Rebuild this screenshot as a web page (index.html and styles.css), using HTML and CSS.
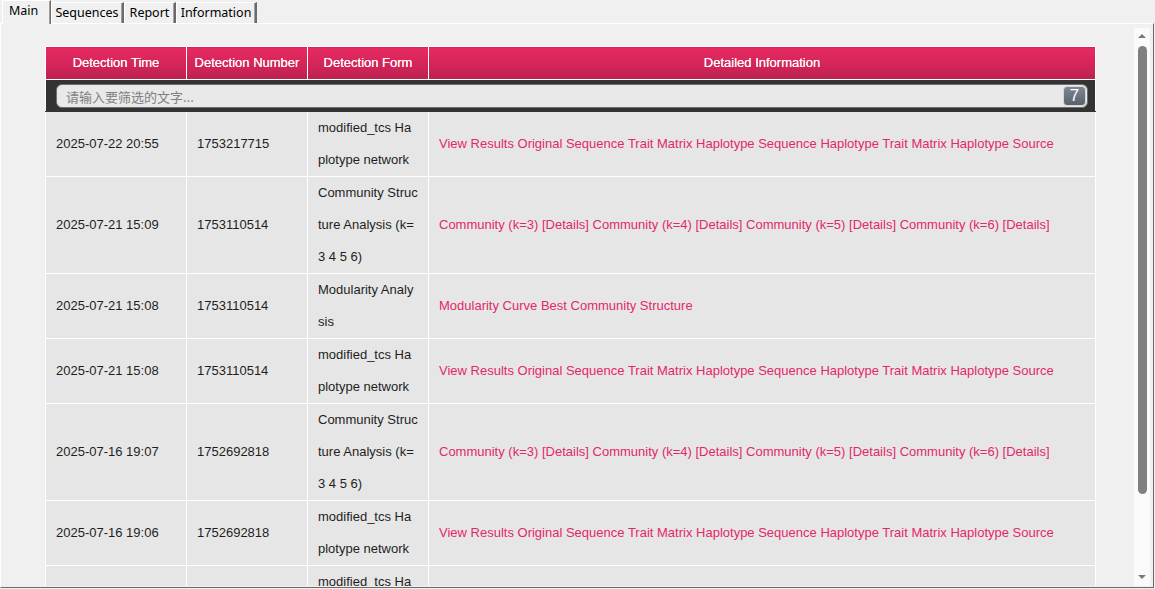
FILE: index.html
```html
<!DOCTYPE html>
<html>
<head>
<meta charset="utf-8">
<link rel="stylesheet" href="styles.css">
</head>
<body>
<div class="window">
  <div class="tabs">
    <div class="tab active">Main</div>
    <div class="tab t-seq">Sequences</div>
    <div class="tab t-rep">Report</div>
    <div class="tab t-info">Information</div>
  </div>
  <div class="pane">
    <div class="viewport">
      <div class="content">
        <table class="grid">
          <colgroup>
            <col class="c1"><col class="c2"><col class="c3"><col class="c4">
          </colgroup>
          <thead>
            <tr>
              <th>Detection Time</th>
              <th>Detection Number</th>
              <th>Detection Form</th>
              <th>Detailed Information</th>
            </tr>
            <tr class="filter-row">
              <td colspan="4" class="filter-cell">
                <div class="filter">
                  <span class="placeholder">请输入要筛选的文字...</span>
                  <span class="badge">7</span>
                </div>
              </td>
            </tr>
          </thead>
          <tbody>
            <tr>
              <td>2025-07-22 20:55</td>
              <td>1753217715</td>
              <td class="form">modified_tcs Ha<br>plotype network</td>
              <td class="links"><a>View Results</a> <a>Original Sequence</a> <a>Trait Matrix</a> <a>Haplotype Sequence</a> <a>Haplotype Trait Matrix</a> <a>Haplotype Source</a></td>
            </tr>
            <tr>
              <td>2025-07-21 15:09</td>
              <td>1753110514</td>
              <td class="form">Community Struc<br>ture Analysis (k=<br>3 4 5 6)</td>
              <td class="links"><a>Community (k=3)</a> <a>[Details]</a> <a>Community (k=4)</a> <a>[Details]</a> <a>Community (k=5)</a> <a>[Details]</a> <a>Community (k=6)</a> <a>[Details]</a></td>
            </tr>
            <tr>
              <td>2025-07-21 15:08</td>
              <td>1753110514</td>
              <td class="form">Modularity Analy<br>sis</td>
              <td class="links"><a>Modularity Curve</a> <a>Best Community Structure</a></td>
            </tr>
            <tr>
              <td>2025-07-21 15:08</td>
              <td>1753110514</td>
              <td class="form">modified_tcs Ha<br>plotype network</td>
              <td class="links"><a>View Results</a> <a>Original Sequence</a> <a>Trait Matrix</a> <a>Haplotype Sequence</a> <a>Haplotype Trait Matrix</a> <a>Haplotype Source</a></td>
            </tr>
            <tr>
              <td>2025-07-16 19:07</td>
              <td>1752692818</td>
              <td class="form">Community Struc<br>ture Analysis (k=<br>3 4 5 6)</td>
              <td class="links"><a>Community (k=3)</a> <a>[Details]</a> <a>Community (k=4)</a> <a>[Details]</a> <a>Community (k=5)</a> <a>[Details]</a> <a>Community (k=6)</a> <a>[Details]</a></td>
            </tr>
            <tr>
              <td>2025-07-16 19:06</td>
              <td>1752692818</td>
              <td class="form">modified_tcs Ha<br>plotype network</td>
              <td class="links"><a>View Results</a> <a>Original Sequence</a> <a>Trait Matrix</a> <a>Haplotype Sequence</a> <a>Haplotype Trait Matrix</a> <a>Haplotype Source</a></td>
            </tr>
            <tr>
              <td>2025-07-16 19:05</td>
              <td>1752692818</td>
              <td class="form">modified_tcs Ha<br>plotype network</td>
              <td class="links"><a>View Results</a> <a>Original Sequence</a> <a>Trait Matrix</a> <a>Haplotype Sequence</a> <a>Haplotype Trait Matrix</a> <a>Haplotype Source</a></td>
            </tr>
          </tbody>
        </table>
      </div>
      <div class="scrollbar">
        <div class="arrow up"></div>
        <div class="thumb"></div>
        <div class="spacer"></div>
        <div class="arrow down"></div>
      </div>
    </div>
  </div>
</div>
</body>
</html>
```

FILE: styles.css
```css
* { box-sizing: border-box; }

html, body {
  margin: 0;
  padding: 0;
  background: #f0f0f0;
}

body {
  width: 1155px;
  height: 589px;
  overflow: hidden;
  font-family: "Liberation Sans", Arial, sans-serif;
}

.window {
  width: 1155px;
  height: 589px;
  display: flex;
  flex-direction: column;
}

/* ---------- tabs ---------- */
.tabs {
  height: 23px;
  display: flex;
  align-items: flex-end;
  padding-left: 2px;
  position: relative;
  z-index: 2;
}

.tab {
  height: 21px;
  font-family: "Noto Sans", sans-serif;
  font-size: 12.5px;
  line-height: 20px;
  color: #000;
  text-align: center;
  white-space: nowrap;
  background: #f0f0f0;
  border-left: 1px solid #ffffff;
  border-top: 1px solid #ffffff;
  border-right: 2px solid #6b6b6b;
  box-shadow: inset -1px 0 0 #a0a0a0;
}

.t-seq { width: 73px; }
.t-rep { width: 52px; }
.t-info { width: 81px; }

.tab.active {
  height: 24px;
  margin-bottom: -1px;
  width: 49px;
  padding: 0 0 0 6px;
  text-align: left;
  font-size: 12.5px;
  line-height: 20px;
  border-right: 1px solid #6b6b6b;
  box-shadow: inset -1px 0 0 #a0a0a0;
}

/* ---------- pane ---------- */
.pane {
  width: 1154px;
  height: 565px;
  border-top: 1px solid #ffffff;
  border-left: 1px solid #ffffff;
  border-right: 1px solid #6b6b6b;
  border-bottom: 1px solid #6b6b6b;
  padding: 4px 3px 1px 2px;
  position: relative;
  z-index: 1;
}

.viewport {
  height: 100%;
  display: flex;
}

.content {
  flex: 1;
  overflow: hidden;
  padding: 18px 0 0 42px;
}

/* ---------- table ---------- */
.grid {
  border-collapse: collapse;
  table-layout: fixed;
  width: 1050px;
  font-size: 13px;
}

.c1 { width: 141px; }
.c2 { width: 121px; }
.c3 { width: 121px; }
.c4 { width: 667px; }

.grid th {
  padding: 0;
  font-weight: normal;
  color: #fff8fc;
  line-height: 32px;
  text-align: center;
  border: 1px solid #ffffff;
  background: linear-gradient(to bottom, #e52a62 0%, #d62559 50%, #bb2150 100%);
  text-shadow: 0 0 0.4px #ffffff;
}

.grid .filter-cell {
  background: #333333;
  border: 1px solid #ffffff;
  border-bottom: 1px solid #333333;
  padding: 4px 7px 3px 10px;
  line-height: normal;
}

.filter {
  height: 24px;
  border: 1px solid #6e6e6e;
  border-radius: 6px;
  background: #e9e9e9;
  display: flex;
  align-items: center;
  justify-content: space-between;
  padding: 0 1px 0 9px;
}

.placeholder {
  font-family: "Noto Sans CJK SC", "Liberation Sans", sans-serif;
  font-size: 13px;
  color: #808080;
}

.badge {
  width: 23px;
  height: 20px;
  border-radius: 4px;
  border: 1px solid #d8d8d8;
  background: linear-gradient(to bottom, #7d8694 0%, #5a626d 100%);
  color: #ffffff;
  font-size: 17px;
  line-height: 18px;
  text-align: center;
}

.grid tbody td {
  background: #e6e6e6;
  border: 1px solid #ffffff;
  padding: 0 8px 0 10px;
  line-height: 32px;
  vertical-align: middle;
  color: #1e1e1e;
  white-space: nowrap;
  overflow: hidden;
}

.links a {
  color: #e3286a;
  text-decoration: none;
}

/* ---------- scrollbar ---------- */
.scrollbar {
  width: 16px;
  background: #fafafa;
  display: flex;
  flex-direction: column;
  align-items: center;
}

.arrow {
  height: 17px;
  width: 16px;
  position: relative;
}

.arrow::after {
  content: "";
  position: absolute;
  left: 4px;
  width: 0;
  height: 0;
  border-left: 4px solid transparent;
  border-right: 4px solid transparent;
}

.arrow.up::after {
  top: 6px;
  border-bottom: 4px solid #7a7a7a;
}

.arrow.down::after {
  bottom: 7px;
  border-top: 4px solid #7a7a7a;
}

.thumb {
  margin-top: 1px;
  width: 9px;
  height: 448px;
  border-radius: 5px;
  background: #808080;
}

.spacer {
  flex: 1;
}
```
